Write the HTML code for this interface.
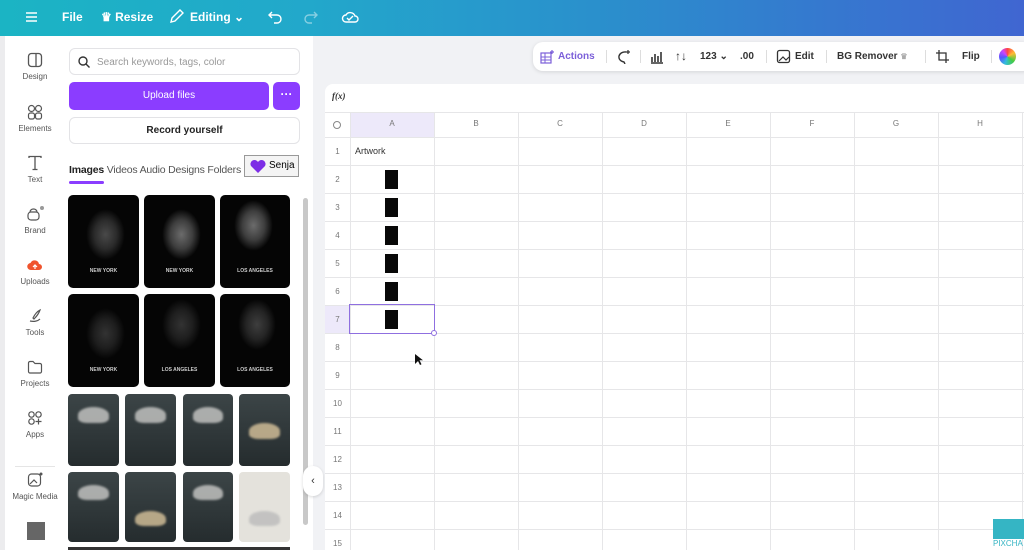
<!DOCTYPE html>
<html><head><meta charset="utf-8"><style>
*{box-sizing:border-box;margin:0;padding:0}
body{width:1024px;height:550px;overflow:hidden;background:#f1f2f5;font-family:"Liberation Sans",sans-serif;position:relative}
.top{position:absolute;left:0;top:0;width:1024px;height:36px;background:linear-gradient(90deg,#1bb4c4 0%,#22a8cb 30%,#2a90cc 58%,#3579cf 80%,#4066d1 100%);color:#fff;font-size:12px;font-weight:bold}
.top span{position:absolute;top:10px}
.rail{position:absolute;left:0;top:36px;width:60px;height:514px;background:#fff;border-left:5px solid #ececee}
.ri{position:absolute;left:0;width:60px;text-align:center;font-size:8px;color:#555}
.ri svg{display:block;margin:0 auto 4px}
.panel{position:absolute;left:60px;top:36px;width:253px;height:514px;background:#fff}
.search{position:absolute;left:69px;top:48px;width:231px;height:27px;border:1px solid #e3e3e6;border-radius:6px;font-size:10px;color:#999;padding:8px 0 0 27px}
.up{position:absolute;left:69px;top:82px;width:200px;height:28px;background:#8b3dff;border-radius:5px;color:#fff;font-size:10px;text-align:center;line-height:28px}
.dots{position:absolute;left:273px;top:82px;width:27px;height:28px;background:#8b3dff;border-radius:5px;color:#fff;text-align:center;line-height:24px;font-weight:bold;font-size:12px}
.rec{position:absolute;left:69px;top:117px;width:231px;height:27px;border:1px solid #e3e3e6;border-radius:6px;font-size:10px;font-weight:bold;color:#222;text-align:center;line-height:25px}
.tabs{position:absolute;left:69px;top:164px;font-size:10.5px;color:#555;letter-spacing:-0.2px;white-space:nowrap}
.tabs b{color:#222}
.senja{position:absolute;left:244px;top:155px;width:55px;height:22px;border:1px solid #999;background:#f4f4f4;font-size:10px;padding:4px 0 0 24px}
.im{position:absolute;background:#050505;border-radius:5px;overflow:hidden}
.im i{position:absolute;left:25%;top:15%;width:55%;height:55%;background:radial-gradient(#777 0,#444 40%,transparent 70%);opacity:.6}
.im b{position:absolute;left:0;width:100%;top:78%;text-align:center;font-size:5px;color:#ccc}
.cl{position:absolute;background:linear-gradient(#3c4547,#252c2e);border-radius:4px}
.cl i{position:absolute;left:20%;top:18%;width:60%;height:22%;background:#c9c9c7;border-radius:50% 50% 30% 30%;opacity:.8;filter:blur(1px)}
.sheet{position:absolute;left:325px;top:84px;width:699px;height:466px;background:#fff;border-radius:8px 0 0 0}
.tb{position:absolute;left:533px;top:42px;width:500px;height:29px;background:#fff;border-radius:10px;box-shadow:0 1px 4px rgba(0,0,0,.12);font-size:10px;color:#333;font-weight:bold}
.tb span{position:absolute;top:9px}
.sep{position:absolute;top:8px;width:1px;height:13px;background:#ddd}
.vl{position:absolute;width:1px;background:#e6e6e8}
.hl{position:absolute;height:1px;background:#e6e6e8}
.ch{position:absolute;top:119px;font-size:8px;color:#777;text-align:center;width:84px}
.rn{position:absolute;left:325px;width:25px;text-align:center;font-size:8px;color:#777}
.th{position:absolute;left:385px;width:13px;height:19px;background:#080808}
</style></head><body>
<div class="top">
<svg style="position:absolute;left:25px;top:11px" width="13" height="12"><path d="M1 2h11M1 6h11M1 10h11" stroke="#fff" stroke-width="1.6"/></svg>
<span style="left:62px">File</span>
<span style="left:101px">♛ Resize</span>
<svg style="position:absolute;left:169px;top:9px" width="15" height="15"><path d="M2 13l1-4 8-8 3 3-8 8z" fill="none" stroke="#fff" stroke-width="1.4"/></svg>
<span style="left:190px">Editing ⌄</span>
<svg style="position:absolute;left:268px;top:10px" width="16" height="14"><path d="M4 2L1 5l3 3M1 5h8a4 4 0 010 8H6" fill="none" stroke="#fff" stroke-width="1.4"/></svg>
<svg style="position:absolute;left:302px;top:10px;opacity:.45" width="16" height="14"><path d="M12 2l3 3-3 3M15 5H7a4 4 0 000 8h3" fill="none" stroke="#fff" stroke-width="1.4"/></svg>
<svg style="position:absolute;left:341px;top:9px" width="18" height="15"><path d="M5 13h9a3 3 0 000-6 5 5 0 00-9-1 3.5 3.5 0 000 7zM6 9l2 2 4-4" fill="none" stroke="#fff" stroke-width="1.4"/></svg>
</div>
<div class="rail">
<div class="ri" style="top:16px"><svg width="16" height="16"><rect x="1.5" y="1.5" width="13" height="13" rx="3" fill="none" stroke="#555" stroke-width="1.3"/><path d="M9 1.5v13" stroke="#555" stroke-width="1.3"/></svg>Design</div>
<div class="ri" style="top:68px"><svg width="16" height="16"><circle cx="4.5" cy="4.5" r="3" fill="none" stroke="#555" stroke-width="1.2"/><circle cx="11.5" cy="4.5" r="3" fill="none" stroke="#555" stroke-width="1.2"/><rect x="1.5" y="9" width="6" height="6" rx="2" fill="none" stroke="#555" stroke-width="1.2"/><rect x="8.5" y="9" width="6" height="6" rx="2" fill="none" stroke="#555" stroke-width="1.2"/></svg>Elements</div>
<div class="ri" style="top:119px"><svg width="16" height="16"><path d="M2 3V1.5h12V3M8 1.5v13M5.5 14.5h5" fill="none" stroke="#555" stroke-width="1.3"/></svg>Text</div>
<div class="ri" style="top:170px"><svg width="20" height="16"><rect x="3" y="6" width="11" height="8" rx="3" fill="none" stroke="#555" stroke-width="1.2"/><path d="M5 6a3.5 3 0 017 0" fill="none" stroke="#555" stroke-width="1.2"/><circle cx="17" cy="2" r="2" fill="#999"/></svg>Brand</div>
<div class="ri" style="top:221px"><svg width="16" height="16"><path d="M4 13h8a3 3 0 000-6 4.5 4.5 0 00-8.5-1A3.5 3.5 0 004 13z" fill="#f0542d"/><path d="M8 12V8M6 10l2-2 2 2" stroke="#fff" stroke-width="1.2" fill="none"/></svg>Uploads</div>
<div class="ri" style="top:272px"><svg width="16" height="16"><path d="M3 13c4 1 8 0 10-2M6 10c2-4 5-7 7-8-1 3-3 6-6 9z" fill="none" stroke="#555" stroke-width="1.2"/></svg>Tools</div>
<div class="ri" style="top:323px"><svg width="16" height="16"><path d="M1.5 4a1.5 1.5 0 011.5-1.5h3l2 2h5a1.5 1.5 0 011.5 1.5v6.5a1.5 1.5 0 01-1.5 1.5H3a1.5 1.5 0 01-1.5-1.5z" fill="none" stroke="#555" stroke-width="1.2"/></svg>Projects</div>
<div class="ri" style="top:374px"><svg width="16" height="16"><circle cx="4.5" cy="4.5" r="2.7" fill="none" stroke="#555" stroke-width="1.2"/><circle cx="11.5" cy="4.5" r="2.7" fill="none" stroke="#555" stroke-width="1.2"/><circle cx="4.5" cy="11.5" r="2.7" fill="none" stroke="#555" stroke-width="1.2"/><path d="M11.5 8.5v6M8.5 11.5h6" stroke="#555" stroke-width="1.2"/></svg>Apps</div>
<div style="position:absolute;left:10px;top:430px;width:40px;height:1px;background:#e5e5e5"></div>
<div class="ri" style="top:436px"><svg width="16" height="16"><rect x="1.5" y="2" width="12" height="12" rx="3" fill="none" stroke="#555" stroke-width="1.2"/><path d="M3 12l4-4 3 3" fill="none" stroke="#555" stroke-width="1.2"/><circle cx="14" cy="2" r="1.5" fill="#555"/></svg>Magic Media</div>
<div style="position:absolute;left:22px;top:486px;width:18px;height:18px;background:#666"></div>
</div>
<div class="panel"></div>
<div class="search"><svg style="position:absolute;left:8px;top:7px" width="12" height="12"><circle cx="5" cy="5" r="4" fill="none" stroke="#333" stroke-width="1.4"/><path d="M8 8l3.5 3.5" stroke="#333" stroke-width="1.4"/></svg>Search keywords, tags, color</div>
<div class="up">Upload files</div><div class="dots">···</div>
<div class="rec">Record yourself</div>
<div class="tabs"><b>Images</b> Videos Audio Designs Folders</div>
<div style="position:absolute;left:69px;top:181px;width:35px;height:3px;background:#8b3dff;border-radius:2px"></div>
<div class="senja"><svg style="position:absolute;left:4px;top:3px" width="18" height="15"><path d="M9 14L2 7a4 4 0 017-4 4 4 0 017 4z" fill="#7d2ee6"/></svg>Senja</div>
<div class="im" style="left:68px;top:195px;width:71px;height:93px"><i></i><b>NEW YORK</b></div>
<div class="im" style="left:144px;top:195px;width:71px;height:93px"><i style="opacity:.9"></i><b>NEW YORK</b></div>
<div class="im" style="left:220px;top:195px;width:70px;height:93px"><i style="opacity:.9;left:20%;top:5%"></i><b>LOS ANGELES</b></div>
<div class="im" style="left:68px;top:294px;width:71px;height:93px"><i style="opacity:.4"></i><b>NEW YORK</b></div>
<div class="im" style="left:144px;top:294px;width:71px;height:93px"><i style="opacity:.4;top:5%"></i><b>LOS ANGELES</b></div>
<div class="im" style="left:220px;top:294px;width:70px;height:93px"><i style="opacity:.5;top:5%"></i><b>LOS ANGELES</b></div>
<div class="cl" style="left:68px;top:394px;width:51px;height:72px"><i></i></div>
<div class="cl" style="left:125px;top:394px;width:51px;height:72px"><i></i></div>
<div class="cl" style="left:183px;top:394px;width:50px;height:72px"><i></i></div>
<div class="cl" style="left:239px;top:394px;width:51px;height:72px"><i style="background:#d9c49c;top:40%"></i></div>
<div class="cl" style="left:68px;top:472px;width:51px;height:70px"><i></i></div>
<div class="cl" style="left:125px;top:472px;width:51px;height:70px"><i style="top:55%;background:#d9c49c"></i></div>
<div class="cl" style="left:183px;top:472px;width:50px;height:70px"><i></i></div>
<div class="cl" style="left:239px;top:472px;width:51px;height:70px;background:#e4e2dc"><i style="top:55%;background:#bbb"></i></div>
<div style="position:absolute;left:68px;top:547px;width:222px;height:3px;background:#333"></div>
<div style="position:absolute;left:303px;top:198px;width:5px;height:327px;background:#c8c8c8;border-radius:3px"></div>
<div style="position:absolute;left:303px;top:466px;width:20px;height:30px;background:#fff;border-radius:10px;box-shadow:0 1px 3px rgba(0,0,0,.15);font-size:11px;text-align:center;line-height:30px;color:#333">‹</div>
<div class="sheet"></div>
<div style="position:absolute;left:332px;top:91px;font-size:9px;font-style:italic;font-weight:bold;color:#333;font-family:'Liberation Serif',serif">f(x)</div>
<div style="position:absolute;left:350px;top:112px;width:84px;height:25px;background:#ede9fa"></div>
<div style="position:absolute;left:325px;top:305px;width:25px;height:28px;background:#ede9fa"></div>
<div class="hl" style="left:325px;top:112px;width:699px"></div>
<div class="hl" style="left:325px;top:137px;width:699px"></div>
<div class="hl" style="left:325px;top:165px;width:699px"></div>
<div class="hl" style="left:325px;top:193px;width:699px"></div>
<div class="hl" style="left:325px;top:221px;width:699px"></div>
<div class="hl" style="left:325px;top:249px;width:699px"></div>
<div class="hl" style="left:325px;top:277px;width:699px"></div>
<div class="hl" style="left:325px;top:305px;width:699px"></div>
<div class="hl" style="left:325px;top:333px;width:699px"></div>
<div class="hl" style="left:325px;top:361px;width:699px"></div>
<div class="hl" style="left:325px;top:389px;width:699px"></div>
<div class="hl" style="left:325px;top:417px;width:699px"></div>
<div class="hl" style="left:325px;top:445px;width:699px"></div>
<div class="hl" style="left:325px;top:473px;width:699px"></div>
<div class="hl" style="left:325px;top:501px;width:699px"></div>
<div class="hl" style="left:325px;top:529px;width:699px"></div>
<div class="vl" style="left:350px;top:112px;height:438px"></div>
<div class="vl" style="left:434px;top:112px;height:438px"></div>
<div class="vl" style="left:518px;top:112px;height:438px"></div>
<div class="vl" style="left:602px;top:112px;height:438px"></div>
<div class="vl" style="left:686px;top:112px;height:438px"></div>
<div class="vl" style="left:770px;top:112px;height:438px"></div>
<div class="vl" style="left:854px;top:112px;height:438px"></div>
<div class="vl" style="left:938px;top:112px;height:438px"></div>
<div class="vl" style="left:1022px;top:112px;height:438px"></div>
<div style="position:absolute;left:333px;top:121px;width:8px;height:8px;border:1px solid #888;border-radius:50%"></div>
<div class="ch" style="left:350px">A</div><div class="ch" style="left:434px">B</div><div class="ch" style="left:518px">C</div><div class="ch" style="left:602px">D</div><div class="ch" style="left:686px">E</div><div class="ch" style="left:770px">F</div><div class="ch" style="left:854px">G</div><div class="ch" style="left:938px">H</div>
<div class="rn" style="top:147px">1</div><div class="rn" style="top:175px">2</div><div class="rn" style="top:203px">3</div><div class="rn" style="top:231px">4</div><div class="rn" style="top:259px">5</div><div class="rn" style="top:287px">6</div><div class="rn" style="top:315px">7</div><div class="rn" style="top:343px">8</div><div class="rn" style="top:371px">9</div><div class="rn" style="top:399px">10</div><div class="rn" style="top:427px">11</div><div class="rn" style="top:455px">12</div><div class="rn" style="top:483px">13</div><div class="rn" style="top:511px">14</div><div class="rn" style="top:539px">15</div>
<div style="position:absolute;left:355px;top:146px;font-size:9px;color:#333">Artwork</div>
<div class="th" style="top:170px"></div><div class="th" style="top:198px"></div><div class="th" style="top:226px"></div><div class="th" style="top:254px"></div><div class="th" style="top:282px"></div><div class="th" style="top:310px"></div>
<div style="position:absolute;left:349px;top:304px;width:86px;height:30px;border:1.5px solid #8f6fe0"></div>
<div style="position:absolute;left:431px;top:330px;width:6px;height:6px;border:1px solid #8f6fe0;background:#fff;border-radius:50%"></div>
<svg style="position:absolute;left:414px;top:353px" width="9" height="13"><path d="M1 1v10l3-3 2 4 1.5-.7-2-4H9z" fill="#111"/></svg>
<div class="tb">
<svg style="position:absolute;left:7px;top:8px" width="14" height="14"><rect x="1" y="3" width="10" height="10" fill="none" stroke="#7b5fd9" stroke-width="1.2"/><path d="M1 7h10M1 10h10M5 3v10" stroke="#7b5fd9" stroke-width="1"/><path d="M12 0v4M10 2h4" stroke="#7b5fd9" stroke-width="1.2"/></svg>
<span style="left:25px;color:#7b5fd9">Actions</span>
<div class="sep" style="left:73px"></div>
<svg style="position:absolute;left:82px;top:7px" width="16" height="15"><path d="M11 3a6 5 0 10-2 10l1 2" fill="none" stroke="#333" stroke-width="1.4"/><path d="M13 1v4M11 3h4" stroke="#333" stroke-width="1.2"/></svg>
<div class="sep" style="left:107px"></div>
<svg style="position:absolute;left:116px;top:7px" width="15" height="15"><path d="M2 14h12M3 13V8M6 13V5M9 13V7M12 13V3" stroke="#333" stroke-width="1.6"/></svg>
<span style="left:142px;font-size:12px;top:7px">↑↓</span>
<span style="left:167px">123 ⌄</span>
<span style="left:207px">.00</span>
<div class="sep" style="left:233px"></div>
<svg style="position:absolute;left:243px;top:7px" width="15" height="15"><rect x="1.5" y="1.5" width="12" height="12" rx="2" fill="none" stroke="#333" stroke-width="1.3"/><path d="M3 12l4-4 3 3 3-3" fill="none" stroke="#333" stroke-width="1.2"/></svg>
<span style="left:262px">Edit</span>
<div class="sep" style="left:293px"></div>
<span style="left:304px">BG Remover <span style="position:static;color:#aaa;font-size:8px">♛</span></span>
<div class="sep" style="left:392px"></div>
<svg style="position:absolute;left:402px;top:7px" width="15" height="15"><path d="M4 1v10h10M1 4h10v10" fill="none" stroke="#333" stroke-width="1.3"/></svg>
<span style="left:429px">Flip</span>
<div class="sep" style="left:458px"></div>
<div style="position:absolute;left:466px;top:6px;width:17px;height:17px;border-radius:50%;background:conic-gradient(#f44 0,#fb3 60deg,#4c4 130deg,#3bd 200deg,#55f 260deg,#c4f 320deg,#f44 360deg)"></div>
</div>
<div style="position:absolute;left:993px;top:519px;width:31px;height:20px;background:#35b5c4"></div>
<div style="position:absolute;left:993px;top:539px;font-size:8px;color:#35b5c4">PIXCHA</div>
</body></html>
